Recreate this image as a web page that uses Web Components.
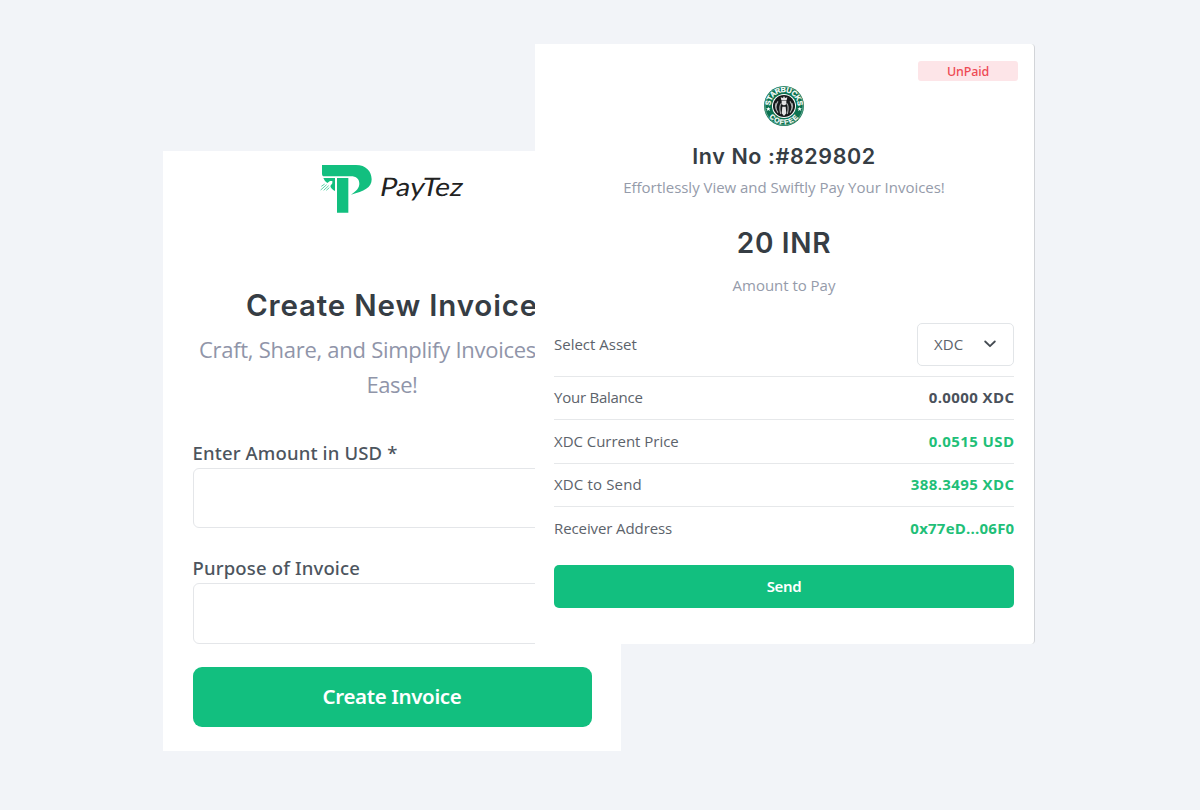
<!DOCTYPE html>
<html lang="en">
<head>
<meta charset="utf-8">
<title>PayTez invoices</title>
<style>
html,body{margin:0;height:100%}
body{background:#f2f4f8;font-family:"Open Sans","Noto Sans",sans-serif;overflow:hidden}
</style>
</head>
<body>
<invoice-stage>
  <create-invoice></create-invoice>
  <pay-invoice></pay-invoice>
</invoice-stage>
<script>
function define(name, html){
  const t=document.createElement('template'); t.innerHTML=html;
  customElements.define(name, class extends HTMLElement{
    constructor(){super();this.attachShadow({mode:'open'}).append(t.content.cloneNode(true));}
  });
}
define('invoice-stage',`<style>
:host{display:flex;align-items:flex-start;width:1200px;height:810px;box-sizing:border-box;padding-left:163px;background:#f2f4f8}
</style><slot></slot>`);

define('paytez-logo',`<style>:host{display:block;height:50px}svg{display:block}</style>
<svg width="144" height="50" viewBox="60 42 432 150">
<path fill="#12bf7f" d="M66 45H168C198 45 215 64 215 88C215 113 192 124 153 134C171 122 178 112 178 101C178 87 169 79 152 79H73C68 79 66 76 66 71Z"/>
<path fill="#12bf7f" d="M111 84H145V188H111ZM70 84H105V123Q93 117 91 108L97 100V93H90L82 99Q73 93 70 84Z"/>
<path stroke="#12bf7f" stroke-width="2.6" opacity=".8" d="M64 109L74 102M62 120L80 104M71 121L86 107M79 121L88 113" fill="none"/>
<text transform="translate(236 137) skewX(-11)" x="0" y="0" font-family="Lato" font-size="77" fill="#222" textLength="248" lengthAdjust="spacingAndGlyphs">PayTez</text>
</svg>`);

define('coffee-logo',`<style>:host{display:block;width:40px;height:40px}svg{display:block}</style>
<svg width="40" height="40" viewBox="0 0 120 120">
<defs><path id="t" d="M19.500 66A41 41 0 1 1 100.500 66"/><path id="b" d="M5 60A55 55 0 0 0 115 60"/></defs>
<circle cx="60" cy="60" r="60" fill="#0b7250"/><circle cx="60" cy="60" r="57" fill="none" stroke="#b9d8cc" stroke-width="1.5"/>
<circle cx="60" cy="60" r="36" fill="#fff"/><circle cx="60" cy="60" r="33" fill="#16191a"/>
<g fill="none" stroke="#a9acac" stroke-width="3.500"><path d="M52 52Q44 60 50 84M68 52Q76 60 70 84M42 46Q30 62 42 80M78 46Q90 62 78 80M36 52Q32 62 36 70M84 52Q88 62 84 70"/></g>
<path fill="#e4e4e4" d="M60 30L63 36L70 34L68 43H52L50 34L57 36ZM53 44H67V54Q60 62 53 54ZM55 62H65L67 82L60 90L53 82Z"/>
<g fill="#fff" stroke="#fff" stroke-width=".6" font-family="Liberation Sans" font-weight="700">
<text font-size="22"><textPath href="#t" startOffset="50%" text-anchor="middle" letter-spacing="-1">STARBUCKS</textPath></text>
<text font-size="21"><textPath href="#b" startOffset="50%" text-anchor="middle" letter-spacing="3">COFFEE</textPath></text></g>
<path fill="#fff" d="M13 63l2 4h5l-4 3l2 5l-5-3l-5 3l2-5l-4-3h5zM107 63l2 4h5l-4 3l2 5l-5-3l-5 3l2-5l-4-3h5z"/>
</svg>`);

define('form-field',`<style>
:host{display:block}
.l{font-family:"Noto Sans",sans-serif;font-size:18.5px;line-height:30px;height:30px;font-weight:500;color:#4d555e;white-space:nowrap;letter-spacing:var(--ls,.14px)}
.i{box-sizing:border-box;height:var(--h,60px);border:1px solid #e4e6e9;border-radius:6px;background:#fff}
</style><div class="l"><slot></slot></div><div class="i"></div>`);

define('green-button',`<style>
:host{display:flex;align-items:center;justify-content:center;box-sizing:border-box;padding-bottom:1.5px;background:#12bf7f;color:#fff;font-family:"Noto Sans",sans-serif;font-weight:600;white-space:nowrap}
</style><slot></slot>`);

define('create-invoice',`<style>
:host{display:block;box-sizing:border-box;flex:none;width:458px;height:600px;margin-top:151px;padding:13px 29.5px 0;background:#fff}
.brand{display:flex;padding-left:127.5px}
h1{margin:70px 0 0;font:600 29.5px/42px Inter,sans-serif;letter-spacing:.85px;color:#363d44;text-align:center;white-space:nowrap}
p{margin:6px 0 0;font-size:22px;line-height:34.5px;color:#9095a9;letter-spacing:-.27px;white-space:nowrap}
.a{display:block;padding-left:6.4px}
.b{display:block;text-align:center;letter-spacing:-.4px}
.f1{margin-top:37px}.f2{margin-top:25px;--h:61px;--ls:.17px}
green-button{height:60px;border-radius:9px;margin-top:23px;font-size:20.5px;letter-spacing:-.35px}
</style>
<div class="brand"><paytez-logo></paytez-logo></div>
<h1>Create New Invoice</h1>
<p><span class="a">Craft, Share, and Simplify Invoices</span><span class="b">Ease!</span></p>
<form-field class="f1">Enter Amount in USD *</form-field>
<form-field class="f2">Purpose of Invoice</form-field>
<green-button>Create Invoice</green-button>`);

define('detail-row',`<style>
:host{display:flex;align-items:center;justify-content:space-between;box-sizing:border-box;height:43.33px;border-top:1px solid #e6e8ea;font-size:15px;line-height:20px;color:#5c636b;white-space:nowrap}
:host([first]){height:63px;border-top:0}
.k{padding-bottom:1.2px;letter-spacing:var(--ls,0)}
.v{padding-bottom:1.2px;font-weight:700;color:#1fbf78;letter-spacing:var(--vs,.4px);margin-right:-.4px}
:host([first]) .k{padding-bottom:1px}
:host([first]) .v{padding:0;margin:0}
:host([dark]) .k,:host([dark]) .v{padding-bottom:2px}
:host([dark]) .v{color:#4a515b}
</style><span class="k"><slot name="label"></slot></span><span class="v"><slot></slot></span>`);

define('asset-select',`<style>
:host{display:flex;align-items:center;justify-content:space-between;box-sizing:border-box;width:97px;height:43px;padding:0 17px 0 16px;border:1px solid #e2e5e8;border-radius:5px;font-weight:400;font-size:15px;letter-spacing:.1px;color:#5c636b}
span{padding-bottom:1px}
svg{display:block}
</style><span><slot></slot></span><svg width="12" height="8" viewBox="0 0 12 8"><path d="M1.2 1.500L6 6.2L10.8 1.500" fill="none" stroke="#444b52" stroke-width="1.8" stroke-linecap="round" stroke-linejoin="round"/></svg>`);

define('status-badge',`<style>
:host{display:flex;align-items:center;justify-content:center;width:100px;height:20px;border-radius:3px;background:#fde5e8;color:#ee4a54;font-family:"Noto Sans",sans-serif;font-size:12.5px;letter-spacing:-.16px;font-weight:500}
</style><slot></slot>`);

define('pay-invoice',`<style>
:host{display:flex;flex-direction:column;box-sizing:border-box;flex:none;width:500px;height:600px;margin:44px 0 0 -86px;padding:17px 20px 0 19px;background:#fff;border-right:1px solid #d2d4d8;border-radius:0 4px 4px 0}
status-badge{align-self:flex-end;margin-right:-4px}
coffee-logo{align-self:center;margin-top:4.5px}
h2,h3,p{margin:0;text-align:center;white-space:nowrap}
h2{font:600 21.5px/30px Inter,sans-serif;letter-spacing:.6px;color:#363d44;margin-top:15.5px}
h3{font:600 28px/40px Inter,sans-serif;letter-spacing:.7px;color:#363d44;margin-top:24px}
p{font-size:15px;line-height:24px;color:#959baa;margin-top:4px;letter-spacing:-.03px}
h3+p{margin-top:9.6px;margin-bottom:16.4px}
green-button{height:43px;border-radius:5px;margin-top:15.5px;font-size:15px;letter-spacing:-.35px}
</style>
<status-badge>UnPaid</status-badge>
<coffee-logo></coffee-logo>
<h2>Inv No :#829802</h2>
<p class="s">Effortlessly View and Swiftly Pay Your Invoices!</p>
<h3>20 INR</h3>
<p>Amount to Pay</p>
<detail-row first><span slot="label">Select Asset</span><asset-select>XDC</asset-select></detail-row>
<detail-row dark style="--ls:-.24px"><span slot="label">Your Balance</span>0.0000 XDC</detail-row>
<detail-row style="--ls:-.03px"><span slot="label">XDC Current Price</span>0.0515 USD</detail-row>
<detail-row style="--ls:.15px"><span slot="label">XDC to Send</span>388.3495 XDC</detail-row>
<detail-row style="--ls:-.1px;--vs:.22px"><span slot="label">Receiver Address</span>0x77eD...06F0</detail-row>
<green-button>Send</green-button>`);
</script>
</body>
</html>
